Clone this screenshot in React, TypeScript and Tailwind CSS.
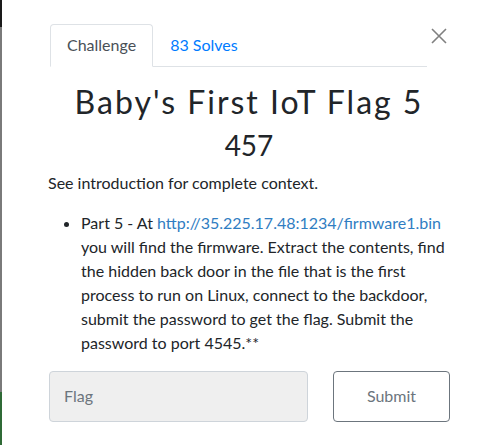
import React from "react";

export default function App() {
  return (
    <div className="flex w-[497px] h-[445px] bg-white overflow-hidden" style={{ fontFamily: "Lato, 'Noto Sans', sans-serif" }}>
      <div className="flex flex-col w-[2px] shrink-0">
        <div className="h-[27px] bg-[#1a1a1a]" />
        <div className="h-[365px] bg-[#7a7a7a]" />
        <div className="flex-1 bg-[#2f6a36]" />
      </div>
      <div className="flex-1 flex flex-col text-[#212529]">
        <div className="flex pt-[24px]">
          <div className="ml-[48px] w-[377px] flex border-b border-[#dee2e6]">
            <div className="px-[16px] py-[8px] border border-[#dee2e6] border-b-white rounded-t-[4px] -mb-px bg-white text-[16px] leading-[24px] text-[#495057]">
              Challenge
            </div>
            <div className="px-[16px] py-[8px] border border-transparent text-[16px] leading-[24px] text-[#007bff]">
              83 Solves
            </div>
          </div>
          <div className="ml-[4px] mt-[4px] w-[16px] h-[16px]">
            <svg width="16" height="16" viewBox="0 0 16 16">
              <path d="M1 1 L15 15 M15 1 L1 15" stroke="#808080" strokeWidth="1.6" fill="none" />
            </svg>
          </div>
        </div>
        <div className="pl-[46px] w-[448px]">
          <h3 className="pt-[16px] text-center text-[32px] leading-[1.2] tracking-[2px] mb-[8px]">
            Baby's First IoT Flag 5
          </h3>
          <h4 className="text-center text-[28px] leading-[1.2] mb-[8px]">457</h4>
          <p className="text-[16px] leading-[24px] mb-[16px]">See introduction for complete context.</p>
          <ul className="list-disc pl-[33px] text-[16px] leading-[24px] mb-[16px]">
            <li>
              Part 5 - At <a className="text-[#2f7dc2]">http://35.225.17.48:1234/firmware1.bin</a> you will find the firmware. Extract the contents, find the hidden back door in the file that is the first process to run on Linux, connect to the backdoor, submit the password to get the flag. Submit the password to port 4545.**
            </li>
          </ul>
          <div className="flex">
            <div className="ml-[1px] w-[259px] h-[51px] bg-[#efefef] border border-[#ced4da] rounded-[4px] flex items-center pl-[14px] text-[16px] text-[#6c757d]">
              Flag
            </div>
            <div className="ml-[25px] w-[117px] h-[51px] border border-[#6c757d] rounded-[4px] flex items-center justify-center text-[16px] text-[#6c757d]">
              Submit
            </div>
          </div>
        </div>
      </div>
    </div>
  );
}
